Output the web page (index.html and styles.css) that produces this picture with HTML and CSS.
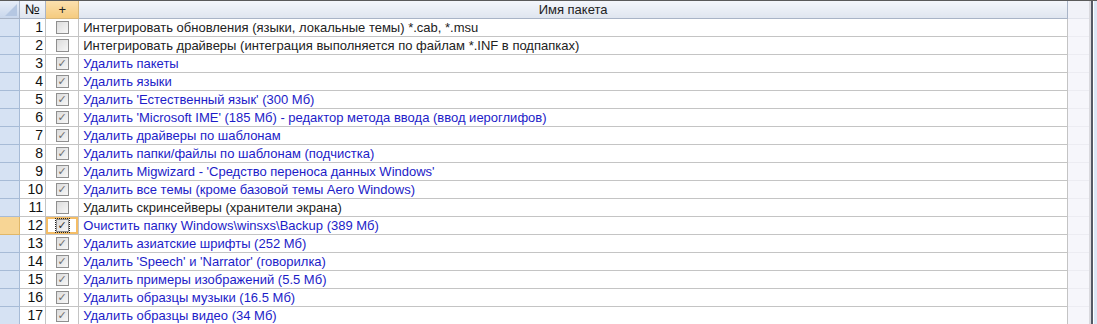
FILE: index.html
```html
<!DOCTYPE html>
<html lang="ru">
<head>
    <meta charset="UTF-8">
    <title>Пакеты</title>
    <link rel="stylesheet" href="styles.css">
</head>
<body>
    <div class="frame">
        <table class="grid">
            <thead>
                <tr>
                    <th class="corner"><span class="tri"></span></th>
                    <th class="num">№</th>
                    <th class="plus">+</th>
                    <th class="name">Имя пакета</th>
                    <th class="filler"></th>
                </tr>
            </thead>
            <tbody>
                <tr><td class="rh"></td><td class="num">1</td><td class="chk"><span class="box"></span></td><td class="name">Интегрировать обновления (языки, локальные темы) *.cab, *.msu</td><td class="filler"></td></tr>
                <tr><td class="rh"></td><td class="num">2</td><td class="chk"><span class="box"></span></td><td class="name">Интегрировать драйверы (интеграция выполняется по файлам *.INF в подпапках)</td><td class="filler"></td></tr>
                <tr class="on"><td class="rh"></td><td class="num">3</td><td class="chk"><span class="box">✓</span></td><td class="name">Удалить пакеты</td><td class="filler"></td></tr>
                <tr class="on"><td class="rh"></td><td class="num">4</td><td class="chk"><span class="box">✓</span></td><td class="name">Удалить языки</td><td class="filler"></td></tr>
                <tr class="on"><td class="rh"></td><td class="num">5</td><td class="chk"><span class="box">✓</span></td><td class="name">Удалить 'Естественный язык' (300 Мб)</td><td class="filler"></td></tr>
                <tr class="on"><td class="rh"></td><td class="num">6</td><td class="chk"><span class="box">✓</span></td><td class="name">Удалить 'Microsoft IME' (185 Мб) - редактор метода ввода (ввод иероглифов)</td><td class="filler"></td></tr>
                <tr class="on"><td class="rh"></td><td class="num">7</td><td class="chk"><span class="box">✓</span></td><td class="name">Удалить драйверы по шаблонам</td><td class="filler"></td></tr>
                <tr class="on"><td class="rh"></td><td class="num">8</td><td class="chk"><span class="box">✓</span></td><td class="name">Удалить папки/файлы по шаблонам (подчистка)</td><td class="filler"></td></tr>
                <tr class="on"><td class="rh"></td><td class="num">9</td><td class="chk"><span class="box">✓</span></td><td class="name">Удалить Migwizard - 'Средство переноса данных Windows'</td><td class="filler"></td></tr>
                <tr class="on"><td class="rh"></td><td class="num">10</td><td class="chk"><span class="box">✓</span></td><td class="name">Удалить все темы (кроме базовой темы Aero Windows)</td><td class="filler"></td></tr>
                <tr><td class="rh"></td><td class="num">11</td><td class="chk"><span class="box"></span></td><td class="name">Удалить скринсейверы (хранители экрана)</td><td class="filler"></td></tr>
                <tr class="on current"><td class="rh"></td><td class="num">12</td><td class="chk"><span class="box focus">✓</span></td><td class="name">Очистить папку Windows\winsxs\Backup (389 Мб)</td><td class="filler"></td></tr>
                <tr class="on"><td class="rh"></td><td class="num">13</td><td class="chk"><span class="box">✓</span></td><td class="name">Удалить азиатские шрифты (252 Мб)</td><td class="filler"></td></tr>
                <tr class="on"><td class="rh"></td><td class="num">14</td><td class="chk"><span class="box">✓</span></td><td class="name">Удалить 'Speech' и 'Narrator' (говорилка)</td><td class="filler"></td></tr>
                <tr class="on"><td class="rh"></td><td class="num">15</td><td class="chk"><span class="box">✓</span></td><td class="name">Удалить примеры изображений (5.5 Мб)</td><td class="filler"></td></tr>
                <tr class="on"><td class="rh"></td><td class="num">16</td><td class="chk"><span class="box">✓</span></td><td class="name">Удалить образцы музыки (16.5 Мб)</td><td class="filler"></td></tr>
                <tr class="on"><td class="rh"></td><td class="num">17</td><td class="chk"><span class="box">✓</span></td><td class="name">Удалить образцы видео (34 Мб)</td><td class="filler"></td></tr>
            </tbody>
        </table>
        <div class="edge"></div>
    </div>
</body>
</html>
```

FILE: styles.css
```css
body {
    margin: 0;
    font-family: 'Liberation Sans', Arial, sans-serif;
    font-size: 13px;
    background-color: #ffffff;
    overflow: hidden;
}

.frame {
    display: flex;
    width: 1097px;
    height: 324px;
    border-top: 1px solid #5a5a5a;
    box-sizing: border-box;
}

.grid {
    border-collapse: collapse;
    table-layout: fixed;
    width: 1089px;
    flex: none;
}

.grid th,
.grid td {
    padding: 0;
    height: 17px;
    line-height: 17px;
    border: 1px solid #c4c4c4;
    white-space: nowrap;
    overflow: hidden;
}

.grid tr > :first-child {
    border-left: none;
}

.grid th {
    font-weight: normal;
    color: #222;
    background: linear-gradient(#f4f6fb, #dfe5ef);
    border-color: #a9b4c6;
    border-top: none;
    text-align: center;
}

.corner {
    width: 19px;
    position: relative;
    background: linear-gradient(#e6edf8, #c9d7ec) !important;
}

.tri {
    position: absolute;
    right: 2px;
    bottom: 2px;
    width: 0;
    height: 0;
    border-left: 12px solid transparent;
    border-bottom: 12px solid #b5c7e2;
}

.grid .num {
    width: 26px;
    text-align: right;
    padding-right: 2px;
    box-sizing: border-box;
    font-size: 14px;
    color: #111;
}

.grid th.num {
    text-align: center;
    padding-right: 0;
    font-size: 14px;
}

.grid .plus {
    width: 32px;
    background: linear-gradient(#fbe0ae, #f5cb7f);
    border-color: #d8b77a;
    font-size: 13px;
}

.grid .name {
    width: 985px;
    text-align: left;
    padding-left: 4px;
    box-sizing: border-box;
    color: #222;
}

.grid th.name {
    text-align: center;
    padding-left: 0;
}

.grid .filler {
    width: 21px;
    background-color: #f6f6fb;
    border-top-color: #ececf2;
    border-bottom-color: #ececf2;
    border-right: none;
}

.grid th.filler {
    background: #f1f2f8;
    border-color: #e2e4ec;
}

.rh {
    background-color: #d6e2f3;
    border-color: #a7bbd6 !important;
}

.current .rh {
    background-color: #f7d595;
    border-color: #e0b768 !important;
}

.chk {
    text-align: center;
    width: 32px;
}

.box {
    display: inline-block;
    width: 11px;
    height: 11px;
    border: 1px solid #8f8f8f;
    background: linear-gradient(135deg, #dcdcdc, #f7f7f7);
    vertical-align: middle;
    margin-top: -2px;
    font-size: 11px;
    font-weight: bold;
    line-height: 11px;
    color: #6e6e6e;
    font-family: 'DejaVu Sans', sans-serif;
    text-align: center;
}

.box.focus {
    outline: 1px dotted #222;
    color: #333;
}

.current .chk {
    box-shadow: inset 0 0 0 2px #f4bd66;
}

.on .name {
    color: #1c1cc8;
}

.edge {
    flex: 1;
    border-left: 2px solid #d9d9de;
    box-shadow: inset 2px 0 0 #555a66;
    background-clip: content-box;
    padding-left: 3px;
    background-color: #dce7f6;
}
```
